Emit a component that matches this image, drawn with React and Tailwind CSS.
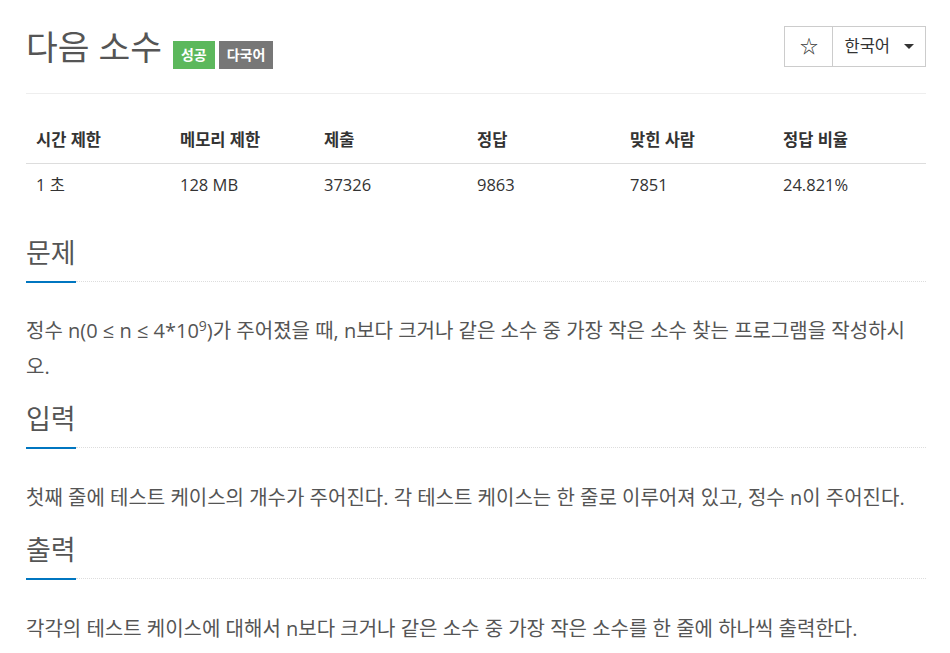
import React from 'react';

const stats = [
  { label: '시간 제한', value: '1 초' },
  { label: '메모리 제한', value: '128 MB' },
  { label: '제출', value: '37326' },
  { label: '정답', value: '9863' },
  { label: '맞힌 사람', value: '7851' },
  { label: '정답 비율', value: '24.821%' },
];

const colWidths = ['w-[144px]', 'w-[144px]', 'w-[153px]', 'w-[153px]', 'w-[153px]', 'w-[153px]'];

function Headline({ children }) {
  return (
    <div className="flex items-end">
      <h2 className="text-[27px] leading-[40px] text-[#555] border-b-2 border-[#0076c0] pb-[8px]">{children}</h2>
      <div className="flex-1 border-b border-dotted border-[#ddd] mb-px"></div>
    </div>
  );
}

export default function App() {
  return (
    <div className="bg-white min-h-[653px] font-['Open_Sans','Noto_Sans_CJK_KR',sans-serif]">
      <div className="mx-[26px] w-[900px]">
        <div className="h-[94px] flex items-center justify-between border-b border-[#eee]">
          <div className="flex items-center">
            <h1 className="text-[34.5px] leading-[40px] text-[#555]">다음 소수</h1>
            <span className="ml-[11px] mt-[16px] h-[28px] px-[8px] flex items-center bg-[#5cb85c] text-white text-[14px] font-bold">성공</span>
            <span className="ml-[4px] mt-[16px] h-[28px] px-[8px] flex items-center bg-[#777] text-white text-[14px] font-bold">다국어</span>
          </div>
          <div className="flex h-[41px] border border-[#ccc] text-[#333]">
            <div className="w-[48px] flex items-center justify-center border-r border-[#ccc] text-[18px]">☆</div>
            <div className="flex items-center pl-[11px] pr-[11px] text-[16.5px]">
              <span>한국어</span>
              <span className="ml-[14px] w-0 h-0 border-l-[5px] border-r-[5px] border-t-[5px] border-l-transparent border-r-transparent border-t-[#333]"></span>
            </div>
          </div>
        </div>

        <table className="mt-[25px] w-[900px] text-[16.5px] text-[#333] border-collapse">
          <thead>
            <tr className="border-b border-[#ddd]">
              {stats.map((s, i) => (
                <th key={s.label} className={`${colWidths[i]} h-[44px] px-[10px] text-left font-bold`}>{s.label}</th>
              ))}
            </tr>
          </thead>
          <tbody>
            <tr>
              {stats.map((s) => (
                <td key={s.label} className="h-[44px] px-[10px] text-left">{s.value}</td>
              ))}
            </tr>
          </tbody>
        </table>

        <section className="mt-[26px]">
          <Headline>문제</Headline>
          <p className="mt-[30px] text-[20px] leading-[36px] text-[#555]">
            정수 n(0 ≤ n ≤ 4*10<sup className="text-[14px] leading-none">9</sup>)가 주어졌을 때, n보다 크거나 같은 소수 중 가장 작은 소수 찾는 프로그램을 작성하시오.
          </p>
        </section>

        <section className="mt-[14px]">
          <Headline>입력</Headline>
          <p className="mt-[31px] text-[20px] leading-[36px] text-[#555]">
            첫째 줄에 테스트 케이스의 개수가 주어진다. 각 테스트 케이스는 한 줄로 이루어져 있고, 정수 n이 주어진다.
          </p>
        </section>

        <section className="mt-[14px]">
          <Headline>출력</Headline>
          <p className="mt-[31px] text-[20px] leading-[36px] text-[#555]">
            각각의 테스트 케이스에 대해서 n보다 크거나 같은 소수 중 가장 작은 소수를 한 줄에 하나씩 출력한다.
          </p>
        </section>
      </div>
    </div>
  );
}
